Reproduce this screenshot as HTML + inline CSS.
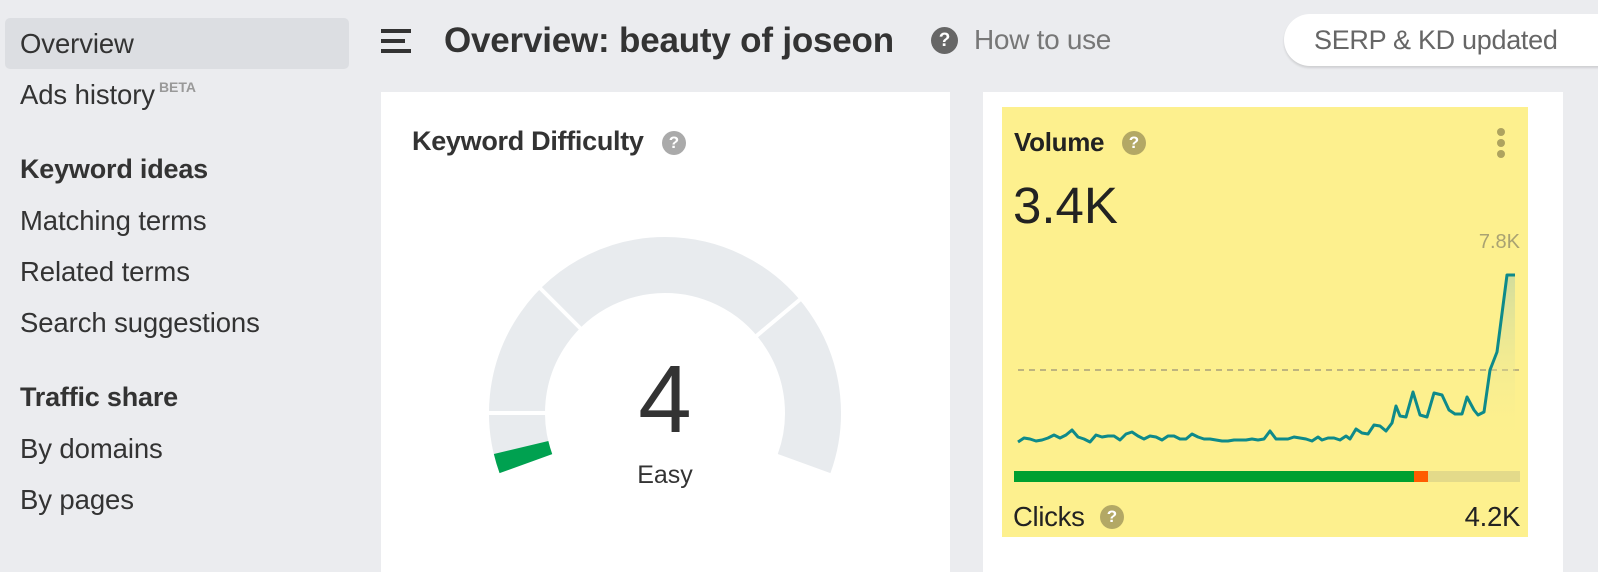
<!DOCTYPE html>
<html><head><meta charset="utf-8"><style>
*{margin:0;padding:0;box-sizing:border-box}
body{width:1598px;height:564px;background:#ebecef;font-family:"Liberation Sans",sans-serif;color:#333;position:relative;overflow:hidden}
.a{position:absolute;white-space:nowrap}
.nav{font-size:27.5px;color:#333;left:20px;letter-spacing:-0.1px}
.h{font-weight:bold;font-size:27px;left:20px;color:#333;letter-spacing:-0.2px}
.q{display:inline-block;border-radius:50%;color:#fff;text-align:center;font-weight:bold}
</style></head><body>
<div class="a" style="left:5px;top:18px;width:344px;height:51px;background:#dcdee2;border-radius:5px"></div>
<div class="a nav" style="top:28px">Overview</div>
<div class="a nav" style="top:79px">Ads history<sup style="font-size:14px;color:#999;font-weight:bold;vertical-align:12px;margin-left:4px;letter-spacing:0">BETA</sup></div>
<div class="a h" style="top:154px">Keyword ideas</div>
<div class="a nav" style="top:205px">Matching terms</div>
<div class="a nav" style="top:256px">Related terms</div>
<div class="a nav" style="top:307px">Search suggestions</div>
<div class="a h" style="top:382px">Traffic share</div>
<div class="a nav" style="top:433px">By domains</div>
<div class="a nav" style="top:484px">By pages</div>

<div class="a" style="left:381px;top:29px;width:30px;height:4px;background:#333"></div>
<div class="a" style="left:381px;top:39px;width:24px;height:4px;background:#333"></div>
<div class="a" style="left:381px;top:49px;width:30px;height:4px;background:#333"></div>
<div class="a" style="left:444px;top:21px;font-size:35px;font-weight:bold;color:#333;letter-spacing:-0.2px">Overview: beauty of joseon</div>
<div class="a q" style="left:931px;top:27px;width:27px;height:27px;background:#666;font-size:19px;line-height:27px">?</div>
<div class="a" style="left:974px;top:24px;font-size:28px;color:#777;letter-spacing:-0.3px">How to use</div>
<div class="a" style="left:1284px;top:14px;width:340px;height:52px;background:#fff;border-radius:26px;box-shadow:0 2px 2px rgba(0,0,0,.12);font-size:27px;color:#666;padding:11px 0 0 30px;letter-spacing:-0.3px">SERP &amp; KD updated</div>

<div class="a" style="left:381px;top:92px;width:569px;height:480px;background:#fff"></div>
<div class="a" style="left:412px;top:126px;font-size:27px;font-weight:bold;color:#333;letter-spacing:-0.3px">Keyword Difficulty</div>
<div class="a q" style="left:662px;top:131px;width:24px;height:24px;background:#aaa;font-size:17px;line-height:24px">?</div>
<svg class="a" style="left:0;top:0" width="1598" height="564">
<path d="M525.9 463.6 A148 148 0 1 1 804.1 463.6" fill="none" stroke="#e8ebee" stroke-width="56"/>
<path d="M525.9 463.6 A148 148 0 0 1 521.1 447.5" fill="none" stroke="#00a150" stroke-width="56"/>
<line x1="485" y1="413" x2="549" y2="413" stroke="#fff" stroke-width="4"/>
<line x1="537" y1="285" x2="583" y2="331" stroke="#fff" stroke-width="4"/>
<line x1="803" y1="297" x2="754" y2="338" stroke="#fff" stroke-width="4"/>
</svg>
<div class="a" style="left:615px;top:350px;width:100px;text-align:center;font-size:96px;color:#333;line-height:100px">4</div>
<div class="a" style="left:615px;top:461px;width:100px;text-align:center;font-size:25px;color:#333">Easy</div>

<div class="a" style="left:983px;top:92px;width:580px;height:480px;background:#fff"></div>
<div class="a" style="left:1002px;top:107px;width:526px;height:430px;background:#fdf08e"></div>
<div class="a" style="left:1014px;top:127px;font-size:26px;font-weight:bold;color:#222;letter-spacing:-0.3px">Volume</div>
<div class="a q" style="left:1122px;top:131px;width:24px;height:24px;background:#b3a865;font-size:17px;line-height:24px">?</div>
<div class="a" style="left:1497px;top:128px;width:8px;height:8px;border-radius:50%;background:#aea35f;box-shadow:0 11px 0 #aea35f,0 22px 0 #aea35f"></div>
<div class="a" style="left:1013px;top:176px;font-size:51px;color:#222">3.4K</div>
<div class="a" style="left:1420px;top:231px;width:100px;text-align:right;font-size:20px;color:#a9a272">7.8K</div>
<svg class="a" style="left:0;top:0" width="1598" height="564">
<defs><linearGradient id="g" x1="0" y1="0" x2="0" y2="1"><stop offset="0" stop-color="#c8d8a0" stop-opacity=".8"/><stop offset="1" stop-color="#fdf08e" stop-opacity="0"/></linearGradient></defs>
<line x1="1018" y1="370" x2="1520" y2="370" stroke="#a9a07a" stroke-width="1.5" stroke-dasharray="6 5"/>
<path d="M1350 440 L1380 430 1390 420 1400 420 1406 415 1413 390 1420 415 1427 417 1434 392 1442 395 1449 410 1455 415 1462 415 1467 395 1477 415 1483 412 1490 370 1497 352 1507 275 1515 275 L1515 445 L1350 445Z" fill="url(#g)"/>
<polyline fill="none" stroke="#0e8a8a" stroke-width="3" stroke-linejoin="round" points="1018,442 1024,438 1030,439 1036,441 1042,440 1048,438 1054,435 1060,438 1066,435 1072,430 1078,437 1084,439 1090,442 1096,435 1102,437 1108,436 1114,436 1120,440 1126,434 1132,432 1138,436 1144,439 1150,436 1156,437 1162,440 1168,436 1174,436 1180,439 1186,439 1192,434 1198,437 1204,439 1210,439 1216,440 1222,441 1228,441 1234,440 1240,440 1246,440 1252,439 1258,440 1264,439 1270,431 1276,439 1282,439 1288,439 1294,437 1300,438 1306,439 1312,441 1318,437 1322,440 1328,438 1334,438 1340,440 1346,436 1350,439 1356,429 1362,433 1368,434 1374,425 1380,426 1386,431 1392,423 1396,406 1400,416 1406,417 1413,392 1420,415 1427,417 1434,393 1442,395 1449,410 1455,414 1462,414 1467,397 1474,410 1478,415 1484,412 1490,370 1497,352 1507,275 1515,275"/>
<rect x="1014" y="471" width="400" height="11" fill="#00a030"/>
<rect x="1414" y="471" width="14" height="11" fill="#ff5c00"/>
<rect x="1428" y="471" width="92" height="11" fill="#e3da8a"/>
</svg>
<div class="a" style="left:1013px;top:501px;font-size:27.5px;color:#222;letter-spacing:-0.3px">Clicks</div>
<div class="a q" style="left:1100px;top:505px;width:24px;height:24px;background:#b3a865;font-size:17px;line-height:24px">?</div>
<div class="a" style="left:1400px;top:501px;width:120px;text-align:right;font-size:27.5px;color:#222;letter-spacing:-0.3px">4.2K</div>
</body></html>
